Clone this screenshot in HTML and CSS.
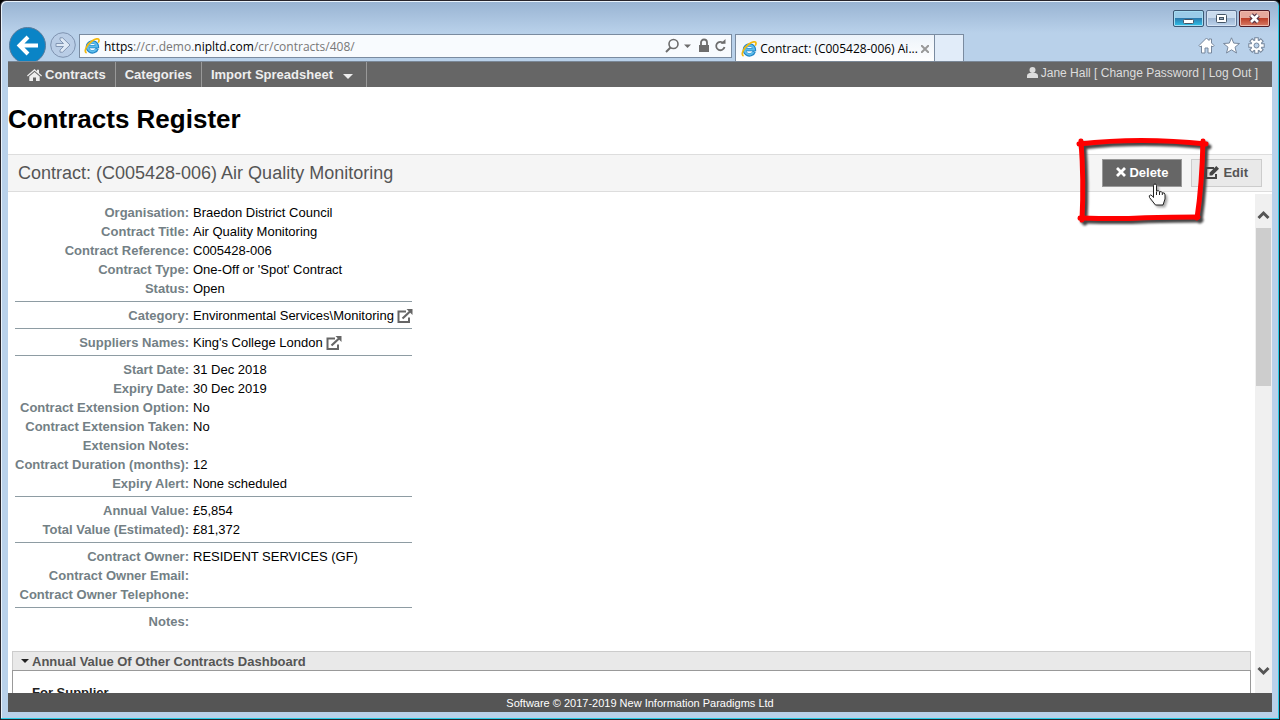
FILE: index.html
```html
<!DOCTYPE html>
<html lang="en">
<head>
    <meta charset="UTF-8">
    <meta name="viewport" content="width=device-width, initial-scale=1.0">
    <title>Contract: (C005428-006) Air Quality Monitoring</title>
    <link rel="stylesheet" href="styles.css">
</head>
<body>
    <svg class="defs" aria-hidden="true">
        <symbol id="ie" viewBox="0 0 16 16">
            <path d="M13.2 10.4A5 5 0 1 1 13.4 8.6H5.2" fill="none" stroke="#1f83c4" stroke-width="3.4"/>
            <path d="M12.6 10.8A4.6 4.6 0 1 1 13 8.5H5" fill="none" stroke="#5cbdec" stroke-width="2"/>
            <path d="M2.6 15C-.6 13.6 2.4 7 8 3c3.2-2.3 7-3 7-.8 0 .8-.3 1.6-.8 2.4" fill="none" stroke="#f3b90c" stroke-width="1.7"/>
        </symbol>
        <symbol id="external" viewBox="0 0 16 14">
            <path d="M9 2.5H1.5V13H12V8.5" fill="none" stroke="#666" stroke-width="2"/>
            <path d="M5.5 9.5L13 2.5" fill="none" stroke="#666" stroke-width="2.2"/>
            <path d="M9.5 0H15.5V6z" fill="#666"/>
        </symbol>
    </svg>

    <div class="window">
        <header class="chrome">
            <div class="caption">
                <button class="cap cap-min" aria-label="Minimise"><svg width="29" height="15"><rect x="9.5" y="8.5" width="10" height="4" rx="1" fill="#fff" stroke="#456"/></svg></button>
                <button class="cap" aria-label="Maximise"><svg width="29" height="15"><rect x="9.5" y="3.5" width="10" height="8" rx="1" fill="#fff" stroke="#456"/><rect x="12.5" y="6.5" width="4" height="2" fill="#9ab" stroke="#456"/></svg></button>
                <button class="cap cap-close" aria-label="Close"><svg width="29" height="15"><path d="M11 4l7 7M18 4l-7 7" stroke="#534" stroke-width="5"/><path d="M11 4l7 7M18 4l-7 7" stroke="#fff" stroke-width="2.6"/></svg></button>
            </div>
            <div class="toolbar">
                <button class="back" aria-label="Back"><svg width="37" height="37"><circle cx="18.5" cy="18.5" r="18" fill="#0a84c6" stroke="#5b7c9c"/><path d="M29 18.5H11M19 10l-8.5 8.5L19 27" fill="none" stroke="#fff" stroke-width="4"/></svg></button>
                <button class="forward" aria-label="Forward"><svg width="26" height="26"><circle cx="13" cy="13" r="12.3" fill="#b9cde6" stroke="#7f93b0"/><path d="M6 11.5h7.5L10 8V5.8h2.6L20 13l-7.400 7.200H10V18l3.500-3.500H6z" fill="#dfeaf6" stroke="#8296b3"/></svg></button>
                <div class="address">
                    <svg width="16" height="16"><use href="#ie"/></svg>
                    <div class="url" role="textbox" contenteditable="true" aria-label="Address" spellcheck="false"><b>https</b>://cr.demo.<b>nipltd.com</b>/cr/contracts/408/</div>
                    <svg width="62" height="16" fill="none" stroke="#6d6d6d">
                        <circle cx="8.500" cy="6" r="4.500" stroke-width="1.600"/><path d="M5.500 9.500L1 14" stroke-width="2"/>
                        <path d="M19 6.500h7L22.500 10z" fill="#6d6d6d" stroke="none"/>
                        <path d="M34 7h10v7H34z" fill="#6d6d6d" stroke="none"/><path d="M36 7V4.500a3 3 0 0 1 6 0V7" stroke-width="1.800"/>
                        <path d="M58.500 5.200A4.200 4.200 0 1 0 59.500 9" stroke-width="1.800"/><path d="M55.500 5.800h5V1z" fill="#6d6d6d" stroke="none"/>
                    </svg>
                </div>
                <div class="tab">
                    <svg width="16" height="16"><use href="#ie"/></svg>
                    <span>Contract: (C005428-006) Ai...</span>
                    <button class="tab-close" aria-label="Close tab"><svg width="8" height="8"><path d="M0 0l8 8M8 0L0 8" stroke="#999" stroke-width="2"/></svg></button>
                </div>
                <button class="new-tab" aria-label="New tab"></button>
                <div class="tools">
                    <button aria-label="Home"><svg width="17" height="17"><path d="M1 8.500L8.500 1l2.500 2.500V2h2.500v4L16 8.500l-1 1.300-1.500-.8v7h-3.500v-5h-3v5H3.500V9L2 9.800z" fill="#fff" stroke="#77879c"/></svg></button>
                    <button aria-label="Favourites"><svg width="17" height="17"><path d="M8.500.8l2.200 5.300 5.800.4-4.500 3.700 1.500 5.800-5-3.200-5 3.200L5 10.200.5 6.500l5.800-.4z" fill="#fff" stroke="#77879c"/></svg></button>
                    <button aria-label="Settings"><svg width="17" height="17"><g stroke="#77879c" stroke-width="4.500"><path d="M8.500.3v16.400M.3 8.500h16.400M2.700 2.700l11.600 11.600M14.300 2.700L2.700 14.300"/></g><g stroke="#fff" stroke-width="2.500"><path d="M8.500 1.300v14.400M1.300 8.500h14.400M3.400 3.400l10.200 10.200M13.600 3.400L3.400 13.600"/></g><circle cx="8.500" cy="8.500" r="5" fill="#fff"/><circle cx="8.500" cy="8.500" r="2.500" fill="#b9d1ea" stroke="#77879c"/></svg></button>
                </div>
            </div>
        </header>

        <div class="page">
            <nav class="menu">
                <a href="#" class="menu-home"><svg width="15" height="12" viewBox="0 0 15 12"><path d="M0 6.500L7.500 0 10 2.200V.8h2v3.100l3 2.600-.8 1L7.500 1.800.8 7.500z" fill="#eee"/><path d="M2.300 7.500l5.200-4.400 5.200 4.400V12H9V8.500H6V12H2.300z" fill="#eee"/></svg>Contracts</a>
                <a href="#">Categories</a>
                <a href="#">Import Spreadsheet<span class="caret"></span></a>
                <div class="user">
                    <svg width="11" height="11"><circle cx="5.500" cy="3" r="3" fill="#ddd"/><path d="M0 11V8.500Q0 6.500 2.500 6h6Q11 6.500 11 8.500V11z" fill="#ddd"/></svg>
                    <span>Jane Hall [ <a href="#">Change Password</a> | <a href="#">Log Out</a> ]</span>
                </div>
            </nav>

            <h1>Contracts Register</h1>

            <div class="title-bar">
                <h2>Contract: (C005428-006) Air Quality Monitoring</h2>
                <div class="actions">
                    <button class="btn btn-delete"><svg width="10" height="10"><path d="M1 1l8 8M9 1L1 9" stroke="#fff" stroke-width="2.800"/></svg>Delete</button>
                    <button class="btn"><svg width="15" height="13" viewBox="0 0 15 13"><path d="M9 2H1v10h10V8" fill="none" stroke="#444" stroke-width="2"/><path d="M4.500 9.500V6.800L11.300 0l2.700 2.700-6.800 6.800z" fill="#444"/></svg>Edit</button>
                    <!-- hand drawn marker round the delete button -->
                    <svg class="marker" width="150" height="105" viewBox="0 0 150 105">
                        <g class="marker-ink" fill="none" stroke="#f00" stroke-width="5" stroke-linecap="round">
                            <path d="M9 14Q70 7 136 14"/>
                            <path d="M133 11Q132 55 127 88"/>
                            <path d="M128 87Q90 87 70 88T10 88"/>
                            <path d="M11 11Q14 50 12 90"/>
                        </g>
                    </svg>
                    <svg class="pointer" width="20" height="24" viewBox="0 0 20 24">
                        <path d="M5.500 13V2.500q0-1.500 1.500-1.500t1.500 1.500V8q2.500-1 3 .8 2.300-.8 2.800 1 2.700-.4 2.700 2V16l-2 6H7.500L1.500 14.500Q.5 12.300 2.500 12q1.500 0 3 2.500z" fill="#fff" stroke="#222"/>
                        <path d="M8.500 8.500V12M11.500 9v3M14.300 10v2" stroke="#222"/>
                    </svg>
                </div>
            </div>

            <div class="body">
                <main class="content">
                    <div class="details">
                        <dl>
                            <dt>Organisation:</dt><dd>Braedon District Council</dd>
                            <dt>Contract Title:</dt><dd>Air Quality Monitoring</dd>
                            <dt>Contract Reference:</dt><dd>C005428-006</dd>
                            <dt>Contract Type:</dt><dd>One-Off or 'Spot' Contract</dd>
                            <dt>Status:</dt><dd>Open</dd>
                        </dl>
                        <dl>
                            <dt>Category:</dt><dd>Environmental Services\Monitoring <a href="#" aria-label="Open category"><svg width="16" height="14"><use href="#external"/></svg></a></dd>
                        </dl>
                        <dl>
                            <dt>Suppliers Names:</dt><dd>King's College London <a href="#" aria-label="Open supplier"><svg width="16" height="14"><use href="#external"/></svg></a></dd>
                        </dl>
                        <dl>
                            <dt>Start Date:</dt><dd>31 Dec 2018</dd>
                            <dt>Expiry Date:</dt><dd>30 Dec 2019</dd>
                            <dt>Contract Extension Option:</dt><dd>No</dd>
                            <dt>Contract Extension Taken:</dt><dd>No</dd>
                            <dt>Extension Notes:</dt><dd></dd>
                            <dt>Contract Duration (months):</dt><dd>12</dd>
                            <dt>Expiry Alert:</dt><dd>None scheduled</dd>
                        </dl>
                        <dl>
                            <dt>Annual Value:</dt><dd>£5,854</dd>
                            <dt>Total Value (Estimated):</dt><dd>£81,372</dd>
                        </dl>
                        <dl>
                            <dt>Contract Owner:</dt><dd>RESIDENT SERVICES (GF)</dd>
                            <dt>Contract Owner Email:</dt><dd></dd>
                            <dt>Contract Owner Telephone:</dt><dd></dd>
                        </dl>
                        <dl>
                            <dt>Notes:</dt><dd></dd>
                        </dl>
                    </div>

                    <details class="dashboard" open>
                        <summary>Annual Value Of Other Contracts Dashboard</summary>
                        <div class="panel"><h3>For Supplier</h3></div>
                    </details>
                </main>
                <div class="scrollbar">
                    <svg width="13" height="10"><path d="M1.500 8l5-5 5 5" fill="none" stroke="#555" stroke-width="3"/></svg>
                    <div class="thumb"></div>
                    <svg width="13" height="10"><path d="M1.500 2l5 5 5-5" fill="none" stroke="#555" stroke-width="3"/></svg>
                </div>
            </div>

            <footer>Software © 2017-2019 New Information Paradigms Ltd</footer>
        </div>
    </div>
</body>
</html>
```
FILE: styles.css
```css
* { box-sizing: border-box; }
body { margin: 0; background: #000; font-family: Arial, "Liberation Sans", sans-serif; font-size: 13px; color: #000; }
button { padding: 0; border: 0; background: none; font: inherit; cursor: pointer; }
a { color: inherit; text-decoration: none; }
svg { display: block; flex: none; }
.defs { position: absolute; width: 0; height: 0; }

/* browser window */
.window { display: flex; flex-direction: column; height: 100vh; padding: 0 7px 7px; border: 1px solid #27242b; border-radius: 6px 6px 0 0; background: linear-gradient(#98b3d2, #b9d1ea 32px); box-shadow: inset -1px -1px 0 #29cbe6, inset 1px 1px 0 #eaf3fc; }
.chrome { flex: none; overflow: hidden; height: 60px; padding-top: 9px; }
.caption { display: flex; justify-content: flex-end; gap: 2px; height: 17px; padding-right: 2px; }
.cap { width: 31px; height: 17px; border: 1px solid #5c7190; border-radius: 2px; background: linear-gradient(#cadbee 48%, #9fb7d4 50%, #bdd3ec); box-shadow: inset 0 0 0 1px #d5e3f3; }
.cap-min { border-color: #3b5773; background: linear-gradient(#9acbe8 48%, #2b7bae 50%, #2ec5ec); box-shadow: inset 0 0 0 1px #a5dcf2; }
.cap-close { border-color: #501a24; background: linear-gradient(#e6a99c 48%, #bd4029 50%, #d77b66); box-shadow: inset 0 0 0 1px #eeb9ac; }
.toolbar { display: flex; align-items: flex-start; height: 34px; padding: 0 7px 0 1px; font-family: "Open Sans", "Noto Sans", sans-serif; font-size: 12px; }
.forward { margin: 5px 3px 0 4px; }
.address { display: flex; flex: 1; align-items: center; gap: 4px; height: 24px; margin: 7px 3px 0 0; padding: 0 4px; border: 1px solid #7a8ba0; background: #f8fbfe; }
.url { flex: 1; color: #777; white-space: nowrap; outline: 0; }
.url b { font-weight: normal; color: #000; }
.tab { display: flex; align-items: center; justify-content: space-between; width: 200px; height: 28px; margin-top: 7px; padding: 0 5px; border: 1px solid #7a8ba0; border-bottom: 0; background: linear-gradient(#edf3fa, #fff); white-space: nowrap; }
.new-tab { width: 29px; height: 28px; margin-top: 7px; border: 1px solid #7a8ba0; border-width: 1px 1px 0 0; background: #e1ecf9; }
.tools { display: flex; gap: 8px; margin: 10px 0 0 234px; }

/* page */
.page { display: flex; flex: 1; flex-direction: column; min-height: 0; background: #fff; }
.menu { display: flex; flex: none; height: 26px; border-top: 1px solid #7a8796; background: #666; color: #eee; }
.menu > a { display: flex; align-items: center; padding: 0 9px; border-right: 1px solid #999; font-weight: bold; }
.menu > .menu-home { gap: 3px; padding-left: 19px; }
.caret { margin: 3px 4px 0 10px; border: 5px solid transparent; border-top-color: #eee; border-bottom: 0; }
.user { display: flex; align-items: center; gap: 3px; margin-left: auto; padding: 0 14px 4px 0; font-size: 12px; color: #ddd; }
h1 { flex: none; margin: 0; padding: 15px 0 17px; font-size: 26px; line-height: 35px; }
.title-bar { display: flex; flex: none; align-items: center; justify-content: space-between; height: 38px; padding: 0 10px; border: 1px solid #ddd; border-width: 1px 0; background: #f5f5f5; }
h2 { margin: 0; font-size: 18px; font-weight: normal; color: #555; }
.actions { position: relative; display: flex; gap: 9px; }
.btn { display: flex; align-items: center; gap: 3px; height: 28px; padding: 0 13px 2px; border: 1px solid #ccc; background: #e9e9e9; font-weight: bold; color: #555; }
.btn-delete { border-color: #999; background: #666; color: #fff; }
.marker { position: absolute; top: -29px; left: -32px; pointer-events: none; }
.marker-ink { filter: drop-shadow(3px 3px 1px #444); }
.pointer { position: absolute; top: 24px; left: 46px; pointer-events: none; filter: drop-shadow(2px 2px 1px #aaa); }
.body { display: flex; flex: 1; min-height: 0; padding-top: 2px; }
.content { flex: 1; overflow: hidden; padding: 5px 4px 0; }
.details { width: 397px; margin: 0 3px 17px; }
.details dl { display: grid; grid-template-columns: 174px 1fr; column-gap: 4px; margin: 0; padding: 4px 0 3px; border-bottom: 1px solid #8e9ca3; line-height: 19px; }
.details dl:last-child { border: 0; }
.details dt { font-weight: bold; text-align: right; color: #738085; white-space: nowrap; }
.details dd { display: flex; align-items: center; gap: 3px; height: 19px; margin: 0; white-space: nowrap; }
.dashboard summary { display: flex; align-items: center; gap: 3px; height: 19px; padding-left: 8px; border: 1px solid #ccc; border-bottom: 0; background: #e9e9e9; font-weight: bold; color: #555; cursor: pointer; }
.dashboard summary::before { content: ""; border: 4px solid transparent; border-top-color: #222; border-bottom: 0; }
.panel { height: 200px; padding: 14px 19px; border: 1px solid #999; }
h3 { margin: 0; font-size: 13px; color: #222; }
.scrollbar { display: flex; flex: none; flex-direction: column; align-items: center; width: 17px; padding: 16px 0 17px; background: #f0f0f0; }
.thumb { width: 15px; height: 34%; margin: 8px 0 auto; background: #cdcdcd; }
footer { flex: none; height: 19px; background: #555; color: #fff; font-size: 11px; line-height: 20px; text-align: center; }
```
